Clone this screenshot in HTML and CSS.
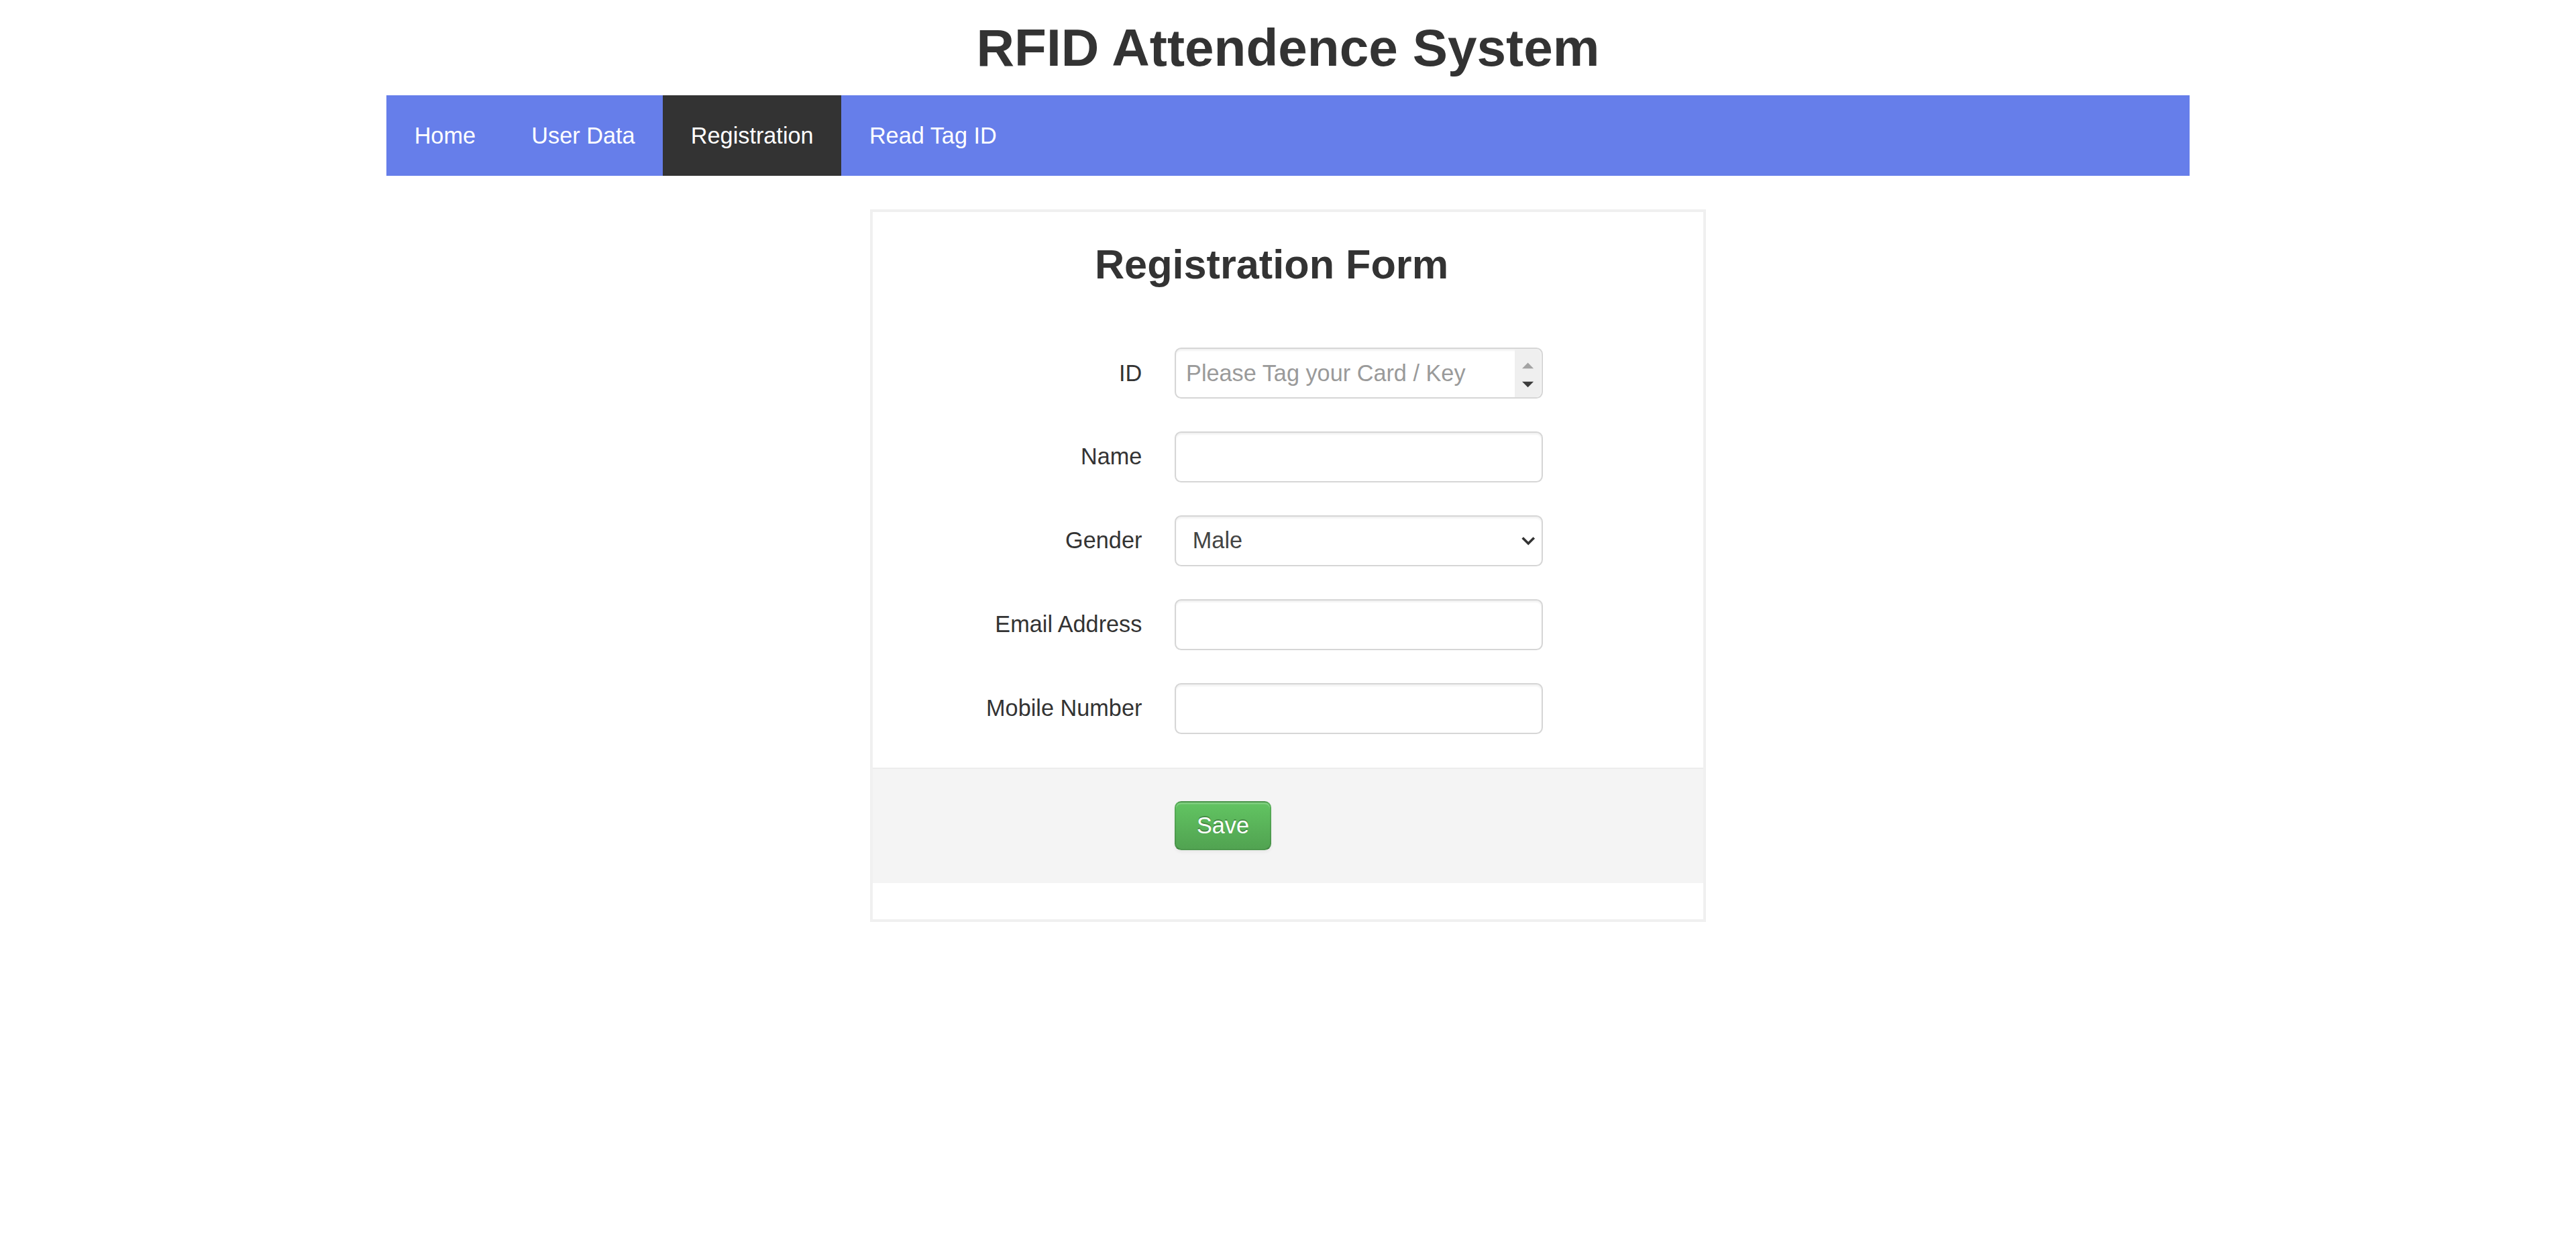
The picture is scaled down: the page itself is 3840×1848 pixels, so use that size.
FILE: index.html
```html
<!DOCTYPE html>
<html lang="en">
<head>
<meta charset="utf-8">
<title>RFID Attendence System</title>
<link rel="stylesheet" href="styles.css">
</head>
<body>
<div class="page">
  <h1 class="site-title">RFID Attendence System</h1>
  <nav class="topnav">
    <a class="nav-link" href="#">Home</a>
    <a class="nav-link" href="#">User Data</a>
    <a class="nav-link active" href="#">Registration</a>
    <a class="nav-link" href="#">Read Tag ID</a>
  </nav>
  <div class="card">
    <h2 class="form-title">Registration Form</h2>
    <form class="reg-form">
      <div class="row">
        <label class="row-label">ID</label>
        <div class="field">
          <input class="text-input" type="text" placeholder="Please Tag your Card / Key">
          <span class="spinner">
            <svg class="spin-icon" viewBox="0 0 16 29" width="16" height="29">
              <path d="M4.5 11.5 L8 8 L11.5 11.5 Z" fill="#a3a3a3"/>
              <path d="M4.5 19.5 L8 23 L11.5 19.5 Z" fill="#3c3c3c"/>
            </svg>
          </span>
        </div>
      </div>
      <div class="row">
        <label class="row-label">Name</label>
        <div class="field"><input class="text-input" type="text"></div>
      </div>
      <div class="row">
        <label class="row-label">Gender</label>
        <div class="field">
          <select class="select-input">
            <option>Male</option>
            <option>Female</option>
          </select>
          <svg class="chevron" viewBox="0 0 10 6" width="10" height="6">
            <path d="M1.5 1 L5 4.5 L8.5 1" fill="none" stroke="#333" stroke-width="1.5"/>
          </svg>
        </div>
      </div>
      <div class="row">
        <label class="row-label">Email Address</label>
        <div class="field"><input class="text-input" type="text"></div>
      </div>
      <div class="row">
        <label class="row-label">Mobile Number</label>
        <div class="field"><input class="text-input" type="text"></div>
      </div>
      <div class="form-actions">
        <button class="btn-save" type="button">Save</button>
      </div>
    </form>
  </div>
</div>
</body>
</html>
```
FILE: styles.css
```css
html, body {
  margin: 0;
  padding: 0;
  background: #ffffff;
}

.page {
  zoom: 2.449;
  font-family: "Liberation Sans", Arial, Helvetica, sans-serif;
  color: #333333;
}

.site-title {
  margin: 10.5px 0 10.3px;
  font-size: 32px;
  font-weight: bold;
  line-height: normal;
  text-align: center;
  color: #333333;
}

.topnav {
  width: 70%;
  margin: 0 auto;
  display: flex;
  background: #667eea;
}

.nav-link {
  display: block;
  padding: 16.6px 17px;
  font-size: 14px;
  line-height: normal;
  color: #ffffff;
  text-decoration: none;
}

.nav-link.active {
  background: #333333;
}

.card {
  box-sizing: border-box;
  width: 509px;
  margin: 20.5px auto 0;
  border: 2px solid #f0f0f0;
  background: #ffffff;
}

.form-title {
  margin: 17.2px 0 36.6px;
  padding-right: 20px;
  font-size: 25px;
  font-weight: bold;
  line-height: normal;
  text-align: center;
  color: #333333;
}

.reg-form {
  margin: 0 0 22px;
}

.row {
  display: flex;
  align-items: center;
  margin-bottom: 20px;
}

.row-label {
  box-sizing: border-box;
  width: 184px;
  padding-right: 20px;
  text-align: right;
  font-size: 14px;
  line-height: 20px;
  color: #333333;
}

.field {
  position: relative;
  width: 224px;
  height: 31px;
}

.text-input,
.select-input {
  box-sizing: border-box;
  width: 224px;
  height: 31px;
  margin: 0;
  padding: 4px 6px;
  border: 1px solid #d6d6d6;
  border-radius: 4px;
  box-shadow: inset 0 1px 1px rgba(0, 0, 0, 0.06);
  background: #ffffff;
  font-family: "Liberation Sans", Arial, Helvetica, sans-serif;
  font-size: 14px;
  line-height: 20px;
  color: #555555;
  outline: none;
}

.text-input::placeholder {
  color: #9a9a9a;
}

.select-input {
  appearance: none;
  -webkit-appearance: none;
  padding-left: 10px;
  color: #444444;
}

.spinner {
  position: absolute;
  top: 1px;
  right: 1px;
  bottom: 1px;
  width: 16px;
  background: #efefef;
  border-radius: 0 3px 3px 0;
}

.spin-icon {
  display: block;
}

.chevron {
  position: absolute;
  right: 4px;
  top: 12.5px;
  pointer-events: none;
}

.form-actions {
  margin-top: 20.6px;
  padding: 19.5px 20px 20px 184px;
  background: #f4f4f4;
  border-top: 1px solid #ececec;
}

.btn-save {
  display: inline-block;
  margin: 0;
  padding: 4.2px 12.5px;
  font-family: "Liberation Sans", Arial, Helvetica, sans-serif;
  font-size: 14px;
  line-height: 20px;
  color: #ffffff;
  text-shadow: 0 -1px 0 rgba(0, 0, 0, 0.25);
  background: linear-gradient(to bottom, #62c462, #51a351);
  border: 1px solid rgba(0, 0, 0, 0.1);
  border-bottom-color: rgba(0, 0, 0, 0.22);
  border-radius: 4px;
  box-shadow: inset 0 1px 0 rgba(255, 255, 255, 0.2), 0 1px 2px rgba(0, 0, 0, 0.05);
  cursor: pointer;
}
```
